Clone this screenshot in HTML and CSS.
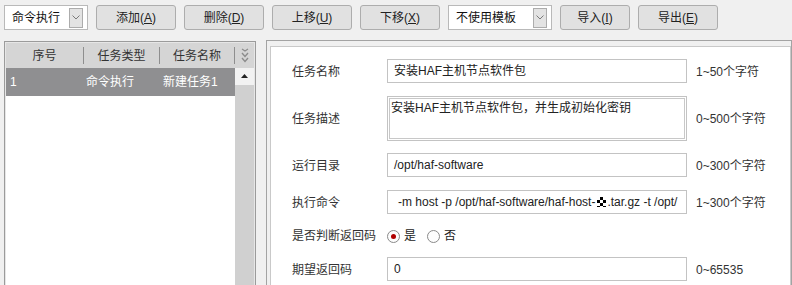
FILE: index.html
```html
<!DOCTYPE html>
<html lang="zh">
<head>
<meta charset="utf-8">
<link rel="stylesheet" href="styles.css">
</head>
<body>
<div class="toolbar">
  <div class="combo combo-type">
    <span class="combo-text">命令执行</span>
    <span class="dd"><svg width="8" height="5" viewBox="0 0 8 5"><polyline points="0.5,0.5 4,4 7.5,0.5" fill="none" stroke="#7a7a7a" stroke-width="1"/></svg></span>
  </div>
  <button class="btn">添加(<u>A</u>)</button>
  <button class="btn">删除(<u>D</u>)</button>
  <button class="btn">上移(<u>U</u>)</button>
  <button class="btn">下移(<u>X</u>)</button>
  <div class="combo combo-tpl">
    <span class="combo-text">不使用模板</span>
    <span class="dd"><svg width="8" height="5" viewBox="0 0 8 5"><polyline points="0.5,0.5 4,4 7.5,0.5" fill="none" stroke="#7a7a7a" stroke-width="1"/></svg></span>
  </div>
  <button class="btn btn-narrow">导入(<u>I</u>)</button>
  <button class="btn">导出(<u>E</u>)</button>
</div>

<div class="main">
  <div class="list-panel">
    <div class="list-head">
      <div class="hcell c1">序号</div>
      <div class="hsep"></div>
      <div class="hcell c2">任务类型</div>
      <div class="hsep"></div>
      <div class="hcell c3">任务名称</div>
      <div class="hsep"></div>
      <div class="hscroll">
        <svg width="8" height="15" viewBox="0 0 8 15"><polyline points="1,1 4,3 7,1" fill="none" stroke="#8c8c8c" stroke-width="1.2"/><polyline points="1,5 4,8.5 7,5" fill="none" stroke="#8c8c8c" stroke-width="1.4"/><polyline points="1,10 4,13.5 7,10" fill="none" stroke="#8c8c8c" stroke-width="1.4"/></svg>
      </div>
    </div>
    <div class="list-body">
      <div class="rows">
        <div class="row selected">
          <div class="cell c1">1</div>
          <div class="cell c2">命令执行</div>
          <div class="cell c3">新建任务1</div>
        </div>
      </div>
      <div class="vscroll">
        <div class="up"><svg width="7" height="4" viewBox="0 0 7 4"><polygon points="3.5,0 7,4 0,4" fill="#222"/></svg></div>
      </div>
    </div>
  </div>

  <div class="form-panel">
    <div class="form-inner">
      <div class="frow">
        <div class="flabel">任务名称</div>
        <div class="field">安装HAF主机节点软件包</div>
        <div class="hint">1~50个字符</div>
      </div>
      <div class="frow frow-tall">
        <div class="flabel">任务描述</div>
        <div class="area">安装HAF主机节点软件包，并生成初始化密钥</div>
        <div class="hint">0~500个字符</div>
      </div>
      <div class="frow">
        <div class="flabel">运行目录</div>
        <div class="field">/opt/haf-software</div>
        <div class="hint">0~300个字符</div>
      </div>
      <div class="frow">
        <div class="flabel">执行命令</div>
        <div class="field field-cmd">-m host -p /opt/haf-software/haf-host-<span class="glyph"></span>.tar.gz -t /opt/</div>
        <div class="hint">1~300个字符</div>
      </div>
      <div class="frow frow-radio">
        <div class="flabel">是否判断返回码</div>
        <div class="radios">
          <span class="radio checked"></span><span class="rtext">是</span>
          <span class="radio"></span><span class="rtext">否</span>
        </div>
      </div>
      <div class="frow">
        <div class="flabel">期望返回码</div>
        <div class="field">0</div>
        <div class="hint">0~65535</div>
      </div>
    </div>
  </div>
</div>
</body>
</html>
```

FILE: styles.css
```css
html, body {
  margin: 0;
  padding: 0;
}
body {
  width: 792px;
  height: 285px;
  overflow: hidden;
  background: #f0f0f0;
  font-family: "Liberation Sans", "Noto Sans CJK SC", sans-serif;
  font-size: 12px;
  color: #222;
}

/* toolbar */
.toolbar {
  display: flex;
  gap: 8px;
  height: 40px;
  box-sizing: border-box;
  padding: 5px 0 0 4px;
}
.combo {
  display: flex;
  align-items: center;
  height: 25px;
  box-sizing: border-box;
  border: 1px solid #b9b9b9;
  background: #fff;
  padding: 0 4px 0 7px;
}
.combo-type { width: 84px; }
.combo-tpl { width: 104px; }
.combo-text {
  flex: 1;
  line-height: 16px;
  color: #111;
}
.dd {
  width: 14px;
  height: 20px;
  box-sizing: border-box;
  border: 1px solid #acacac;
  background: #e3e3e3;
  display: flex;
  align-items: center;
  justify-content: center;
}
.btn {
  width: 80px;
  height: 25px;
  box-sizing: border-box;
  border: 1px solid #adadad;
  border-radius: 3px;
  background: #e1e1e1;
  font-family: inherit;
  font-size: 12px;
  color: #222;
  padding: 0;
  line-height: 16px;
}
.btn u { text-decoration: underline; text-underline-offset: 1px; }
.btn-narrow { width: 70px; }

/* main */
.main {
  display: flex;
  align-items: flex-start;
  gap: 10px;
  padding-left: 4px;
}

/* list panel */
.list-panel {
  width: 252px;
  height: 244px;
  margin-top: 1px;
  box-sizing: border-box;
  border: 1px solid #9b9b9b;
  border-bottom: 0;
  padding: 1px 1px 0;
  background: #e6e6e6;
  display: flex;
  flex-direction: column;
}
.list-head {
  display: flex;
  align-items: center;
  height: 25px;
  background: #d5d5d5;
  color: #333;
}
.hcell {
  text-align: center;
  line-height: 16px;
}
.hsep {
  width: 1px;
  height: 17px;
  background: #8e8e8e;
}
.c1 { width: 77px; }
.c2 { width: 75px; }
.c3 { width: 74px; }
.hscroll {
  width: 19px;
  display: flex;
  justify-content: center;
  align-items: center;
}
.list-body {
  flex: 1;
  display: flex;
}
.rows {
  width: 229px;
  background: #fff;
}
.row {
  display: flex;
  height: 28px;
  align-items: center;
}
.row .cell {
  line-height: 16px;
  box-sizing: border-box;
  padding-left: 4px;
}
.row .c2 { width: 76px; padding-left: 3px; }
.row .c3 { width: 75px; padding-left: 4px; }
.row.selected {
  background: #8f8f91;
  color: #fff;
}
.vscroll {
  width: 19px;
  background: #d0d0d0;
}
.vscroll .up {
  height: 17px;
  background: #f2f2f2;
  display: flex;
  align-items: center;
  justify-content: center;
  padding-bottom: 2px;
  box-sizing: border-box;
}

/* form panel */
.form-panel {
  width: 600px;
  height: 245px;
  box-sizing: border-box;
  border: 1px solid #a3a3a3;
  border-bottom: 0;
  padding: 5px 0 0 3px;
  background: #f0f0f0;
}
.form-inner {
  height: 100%;
  box-sizing: border-box;
  border: 1px solid #c9c9c9;
  border-bottom: 0;
  background: #fff;
  padding: 12px 0 0 21px;
  display: flex;
  flex-direction: column;
  gap: 12px;
}
.frow {
  display: flex;
  align-items: center;
  height: 25px;
  flex-shrink: 0;
}
.frow-tall { height: 45px; }
.frow-radio { height: 18px; }
.flabel {
  width: 95px;
  color: #333;
  line-height: 16px;
}
.field {
  width: 300px;
  height: 24px;
  box-sizing: border-box;
  border: 1px solid #c3c3c3;
  padding: 0 6px;
  line-height: 22px;
  white-space: nowrap;
  overflow: hidden;
  color: #222;
}
.frow .field { align-self: flex-start; }
.field-cmd { padding-left: 10px; }
.glyph {
  display: inline-block;
  width: 9px;
  height: 10px;
  vertical-align: -1px;
  margin: 0 1px 0 2px;
  background: repeating-conic-gradient(#000 0 25%, #fff 0 50%) 0 0 / 6px 6px;
}
.area {
  width: 300px;
  height: 45px;
  box-sizing: border-box;
  border: 1px solid #c3c3c3;
  box-shadow: inset 0 0 0 1px #fff, inset 0 0 0 2px #c8c8c8;
  padding: 3px 3px;
  line-height: 16px;
  color: #222;
}
.hint {
  margin-left: 9px;
  color: #333;
  line-height: 16px;
}
.radios {
  display: flex;
  align-items: center;
}
.radio {
  width: 13px;
  height: 13px;
  box-sizing: border-box;
  border: 1px solid #8a8a8a;
  border-radius: 50%;
  background: #fdfdfd;
  display: flex;
  align-items: center;
  justify-content: center;
}
.radio.checked::after {
  content: "";
  width: 5px;
  height: 5px;
  border-radius: 50%;
  background: #b00000;
}
.rtext {
  margin: 0 11px 0 4px;
  line-height: 16px;
  color: #222;
}
```
